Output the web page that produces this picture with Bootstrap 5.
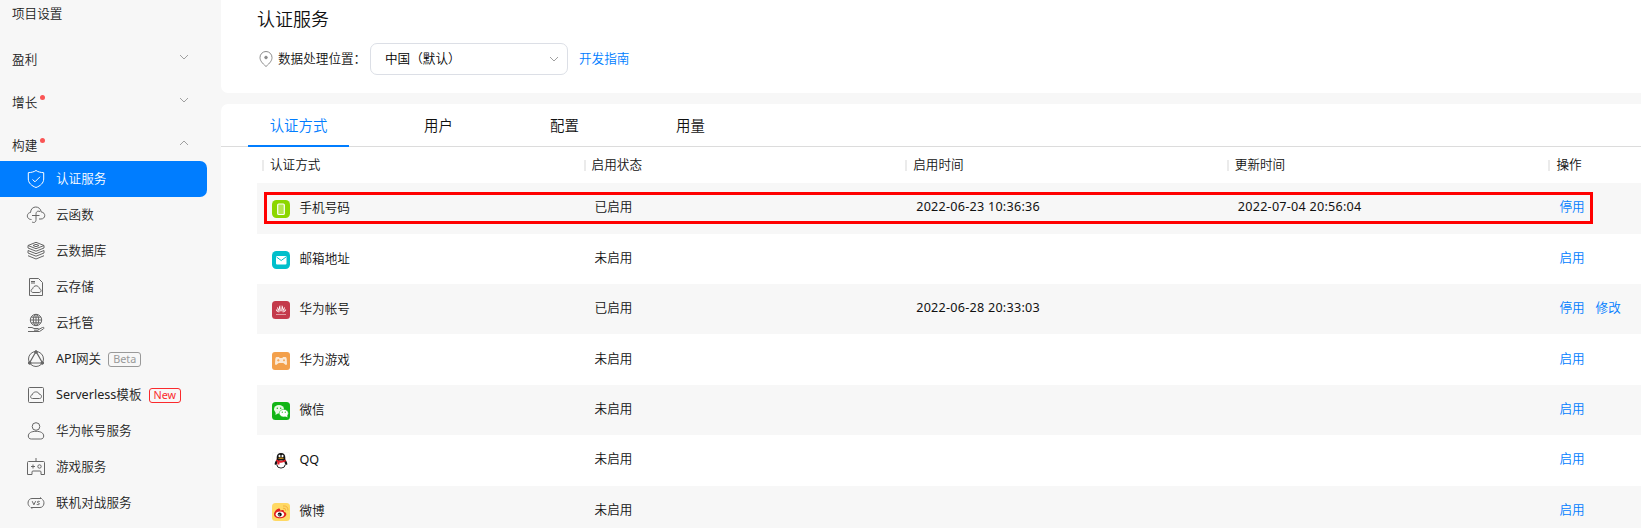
<!DOCTYPE html>
<html lang="zh-CN">
<head>
<meta charset="utf-8">
<meta name="viewport" content="width=device-width, initial-scale=1">
<title>认证服务</title>
<link href="https://cdn.jsdelivr.net/npm/bootstrap@5.3.0/dist/css/bootstrap.min.css" rel="stylesheet">
<style>
  body { font-family: "Noto Sans", "Noto Sans CJK SC", sans-serif; font-size: 12.6px; line-height: 20px; font-weight: 350; color: #111; background: #f7f7f7; height: 528px; overflow: hidden; }
  a { color: #007dff; text-decoration: none; }
  .side { width: 221px; color: #222; }
  .side-top { height: 35px; padding: 4px 0 0 12px; }
  .side-group { height: 43px; padding: 0 32px 0 12px; }
  .side-group.last { margin-bottom: -3px; }
  .side-group .label { padding-top: 6px; letter-spacing: .2px; }
  .dot { width: 5px; height: 5px; border-radius: 50%; background: #fa5555; margin: -4px 0 0 2px; }
  .side-item { height: 36px; width: 207px; padding-left: 26px; color: #222; gap: 10px; }
  .side-item svg { width: 20px; height: 20px; fill: none; stroke: #666; stroke-width: 1; flex: none; }
  .side-item.on { background: #007dff; color: #fff; border-radius: 0 7px 7px 0; }
  .side-item.on svg { stroke: #fff; }
  .tagbox { height: 15px; line-height: 12px; font-size: 10.8px; font-weight: 400; border: 1px solid #999; color: #999; border-radius: 3px; padding: 0 4px; margin-left: -3px; }
  .tagbox.new { color: #fa2a2d; border-color: #fa2a2d; }
  .lat { font-weight: 400; }
  .chev { fill: none; stroke: #a0a0a0; stroke-width: 1; width: 10px; height: 6px; }
  .head-panel { height: 93px; border-radius: 0 0 0 7px; padding: 8px 0 0 36px; }
  .page-title { font-size: 18px; line-height: 22px; font-weight: 350; margin: 0 0 13px; }
  .region { width: 198px; height: 32px; border: 1px solid #dcdfe6; border-radius: 7px; padding: 0 8px 0 14px; margin: 0 11px 0 8px; color: #000; }
  .main-panel { margin-top: 11px; height: 424px; border-radius: 7px 0 0 0; overflow: hidden; }
  .tabs { height: 43px; border-bottom: 1px solid #dcdcdc; padding-left: 27px; font-size: 14.4px; }
  .tabs a { color: #222; height: 43px; line-height: 44px; padding: 0 49px; width: 126px; white-space: nowrap; }
  .tabs a.on { width: 101px; color: #007dff; border-bottom: 2px solid #007dff; padding: 0; text-align: center; margin-right: 26px; }
  .tbl { margin-left: 36px; }
  .trow { display: grid; grid-template-columns: repeat(4, 321.6px) 1fr; height: 50.4px; align-items: center; }
  .trow.stripe { background: #f7f7f7; }
  .trow > div { padding-left: 16px; height: 22px; }
  .trow .way { padding-left: 15px; gap: 9.5px; }
  .trow svg { width: 18px; height: 18px; flex: none; position: relative; top: 1px; }
  .thead-row { height: 36.2px; }
  .trow.thead-row > div { padding-left: 5px; }
  .thead-row > div::before { content: ""; width: 2px; height: 11px; background: #ebebeb; margin-right: 6px; }
  .trow .num { font-weight: 400; letter-spacing: .25px; }
  .focus-box { position: absolute; left: 264px; top: 192px; width: 1329px; height: 32px; border: 3px solid #f00; }
</style>
</head>
<body>
<div class="d-flex">
  <nav class="side flex-shrink-0">
    <div class="side-top">项目设置</div>
    <div class="side-group d-flex align-items-center"><span class="label">盈利</span><svg class="chev ms-auto" viewBox="0 0 10 6"><path d="M1 1l4 4 4-4"/></svg></div>
    <div class="side-group d-flex align-items-center"><span class="label">增长</span><i class="dot"></i><svg class="chev ms-auto" viewBox="0 0 10 6"><path d="M1 1l4 4 4-4"/></svg></div>
    <div class="side-group last d-flex align-items-center"><span class="label">构建</span><i class="dot"></i><svg class="chev ms-auto" viewBox="0 0 10 6"><path d="M1 5l4-4 4 4"/></svg></div>
    <a class="side-item on d-flex align-items-center"><svg viewBox="0 0 20 20"><path d="M10 1.500C12 3 15 3.500 17.700 3.700V10c0 4-3.500 7-7.700 8.500C5.800 17 2.300 14 2.300 10V3.700C5 3.500 8 3 10 1.500zM6.500 10.500l2.500 2.300 5-5"/></svg>认证服务</a>
    <a class="side-item d-flex align-items-center"><svg viewBox="0 0 20 20"><path d="M5.500 14.500C0 14.500.3 7.800 4.500 7.500 5 0 14.500.500 15.200 7c5 .5 4.500 7-.2 7h-2M14 6.500c-3-1-4 .5-4 3v5c0 3-2 3.500-4 2.500M6 10.500h7.500"/></svg>云函数</a>
    <a class="side-item d-flex align-items-center"><svg viewBox="0 0 20 20"><path d="M10 1.300l8 3.200-8 3.200-8-3.200zM10 3.300l3 1.200-3 1.200-3-1.200zM2 4.500V7l8 3.200L18 7V4.500M2 9.500l8 3.200 8-3.200M2 12l8 3.200 8-3.200M2 14.700l8 3.300 8-3.300M2 9.500V12M18 9.500V12"/></svg>云数据库</a>
    <a class="side-item d-flex align-items-center"><svg viewBox="0 0 20 20"><path d="M3.500 1.500h9l4 4v13h-13zM5 4.500h4M5 6h4M7 15.500c-2.500 0-2.500-3.500-.3-3.700.8-4 6-4 6.800 0 2.300.2 2 3.700-.3 3.700z"/></svg>云存储</a>
    <a class="side-item d-flex align-items-center"><svg viewBox="0 0 20 20"><circle cx="10" cy="7" r="5.700"/><ellipse cx="10" cy="7" rx="2.700" ry="5.700"/><path d="M10 1.300v11.400M4.300 7h11.400M5.200 4.200h9.600M5.200 9.800h9.600M2 14.500h4l2 1h4c1 0 1 1.700 0 1.700H8M12.500 16.500l4-2c1.500-.5 2 .5 1 1.300l-4 2.700H2"/></svg>云托管</a>
    <a class="side-item d-flex align-items-center"><svg viewBox="0 0 20 20"><circle cx="10" cy="10" r="7.500"/><path d="M10 2.500L3.500 14h13z" stroke-width="1.200"/><g fill="#666"><circle cx="10" cy="3" r="1.300"/><circle cx="3.700" cy="14" r="1.300"/><circle cx="16.300" cy="14" r="1.300"/></g></svg><span><span class="lat">API</span>网关</span><span class="tagbox">Beta</span></a>
    <a class="side-item d-flex align-items-center"><svg viewBox="0 0 20 20"><rect x="2.500" y="2.500" width="15" height="15" rx="1"/><path d="M6.500 13.500c-2.500 0-2.500-3.500-.2-3.700.5-3.500 6-4 7-.6 2.800 0 3 4.300.2 4.300z"/></svg><span><span class="lat">Serverless</span>模板</span><span class="tagbox new">New</span></a>
    <a class="side-item d-flex align-items-center"><svg viewBox="0 0 20 20"><circle cx="10" cy="5.500" r="3.800"/><path d="M2.300 15c0-3 3-4.700 7.700-4.700s7.700 1.700 7.700 4.700c0 2-1.200 3-3 3H5.300c-1.800 0-3-1-3-3z"/></svg>华为帐号服务</a>
    <a class="side-item d-flex align-items-center"><svg viewBox="0 0 20 20"><path d="M10 1v3.500M1.500 5.500q0-1 1-1h15q1 0 1 1v12h-3.500v-2.500q0-1-1-1H7q-1 0-1 1v2.500H1.500zM5 9.500h4M7 7.500v4"/><circle cx="13.500" cy="9.500" r="1.700"/></svg>游戏服务</a>
    <a class="side-item d-flex align-items-center"><svg viewBox="0 0 20 20"><path d="M3.700 13.500C1 12 1.500 5.500 6 5.500h9.500l-1.500-1M16.300 6.500c2.700 1.500 2.200 8-2.300 8H4.800l1.500 1M6.200 8.200l1.700 3.600 1.700-3.600M13.700 8.500c-2.700-.8-3 1-1.300 1.500 2 .5 1 2.300-1.700 1.400"/></svg>联机对战服务</a>
  </nav>

  <main class="flex-grow-1">
    <section class="head-panel bg-white">
      <h1 class="page-title">认证服务</h1>
      <div class="d-flex align-items-center">
        <svg width="16" height="18" viewBox="0 0 16 18" fill="none" stroke="#8c8c8c" style="margin-right:5px"><path d="M9 16.500C5 13 3 10.500 3 7.500a6 6 0 0 1 12 0c0 3-2 5.500-6 9z"/><circle cx="9" cy="7.500" r="1.300" fill="#8c8c8c"/></svg>
        <span style="width:84px;white-space:nowrap">数据处理位置：</span>
        <div class="region d-flex align-items-center"><span>中国（默认）</span><svg class="chev ms-auto" viewBox="0 0 10 6"><path d="M1 1l4 4 4-4"/></svg></div>
        <a href="#">开发指南</a>
      </div>
    </section>

    <section class="main-panel bg-white">
      <div class="tabs d-flex"><a class="on">认证方式</a><a>用户</a><a>配置</a><a>用量</a></div>
      <div class="tbl">
        <div class="trow thead-row">
          <div class="d-flex align-items-center">认证方式</div><div class="d-flex align-items-center">启用状态</div><div class="d-flex align-items-center">启用时间</div><div class="d-flex align-items-center">更新时间</div><div class="d-flex align-items-center">操作</div>
        </div>
        <div class="trow stripe">
          <div class="way d-flex align-items-center"><svg viewBox="0 0 18 18"><rect width="18" height="18" rx="4.500" fill="#8cd600"/><rect x="5.700" y="4" width="6.600" height="10.500" rx="1" fill="#b4e650" stroke="#fff" stroke-width="1.200"/></svg>手机号码</div><div>已启用</div><div class="num">2022-06-23 10:36:36</div><div class="num">2022-07-04 20:56:04</div><div><a href="#">停用</a></div>
        </div>
        <div class="trow">
          <div class="way d-flex align-items-center"><svg viewBox="0 0 18 18"><rect width="18" height="18" rx="4.500" fill="#00bfcb"/><rect x="4" y="5" width="10.500" height="8.500" rx="1" fill="#fff"/><path d="M4.500 6l4.700 3.500L14 6" fill="none" stroke="#00bfcb"/></svg>邮箱地址</div><div>未启用</div><div></div><div></div><div><a href="#">启用</a></div>
        </div>
        <div class="trow stripe">
          <div class="way d-flex align-items-center"><svg viewBox="0 0 18 18"><rect width="18" height="18" rx="3.500" fill="#c43a4b"/><g fill="#fff"><path d="M8.800 10.800C6.500 8 6.500 5.500 8.200 4.300zM9.200 10.800c2.300-2.800 2.300-5.300.6-6.500zM8.200 11C5.500 9.500 4.700 7.500 5.600 5.800zM9.800 11c2.700-1.500 3.500-3.500 2.600-5.200zM7.700 11.500C5 11.300 3.700 9.800 3.900 8zM10.300 11.500c2.700-.2 4-1.700 3.800-3.500z"/><path d="M4 13h10v1H4z" opacity=".5"/></g></svg>华为帐号</div><div>已启用</div><div class="num">2022-06-28 20:33:03</div><div></div><div><a href="#">停用</a><a href="#" style="margin-left:11px">修改</a></div>
        </div>
        <div class="trow">
          <div class="way d-flex align-items-center"><svg viewBox="0 0 18 18"><rect width="18" height="18" rx="3" fill="#f3a04b"/><path d="M4.500 5h2.300l1 1h2.400l1-1h2.300q1 0 1.200 2l.3 4.500q0 2-1.500 1.300L11.300 11H6.700l-2.200 1.800Q3 13.500 3 11.500L3.300 7q.2-2 1.200-2z" fill="#fbe9d5"/><path d="M5 8.300h2.600M6.300 7v2.600M11 8.300h2M12 7.300v2" stroke="#f3a04b" stroke-width=".8"/></svg>华为游戏</div><div>未启用</div><div></div><div></div><div><a href="#">启用</a></div>
        </div>
        <div class="trow stripe">
          <div class="way d-flex align-items-center"><svg viewBox="0 0 18 18"><rect width="18" height="18" rx="3.500" fill="#11b516"/><g fill="#e9f9e6"><ellipse cx="7" cy="7.300" rx="5" ry="4.200"/><path d="M3.800 9.500L3.500 13l3-2z"/></g><ellipse cx="11.800" cy="11.200" rx="4.500" ry="3.800" fill="#fff" stroke="#11b516" stroke-width=".5"/><path d="M13 14l2.500 1.500-.5-3z" fill="#fff"/><g fill="#11b516"><circle cx="5.300" cy="6.200" r=".7"/><circle cx="8.700" cy="6.200" r=".7"/><circle cx="10.300" cy="10.200" r=".6"/><circle cx="13.300" cy="10.200" r=".6"/></g></svg>微信</div><div>未启用</div><div></div><div></div><div><a href="#">启用</a></div>
        </div>
        <div class="trow">
          <div class="way d-flex align-items-center"><svg viewBox="0 0 18 18"><rect x=".3" y=".3" width="17.400" height="17.400" rx="2" fill="#fff" stroke="#f2f2f2" stroke-width=".6"/><path d="M9 1c3 0 4.300 2 4.300 4.500v2c1.300 1.500 2.200 3.500 2 5-.4.900-1.200.3-1.700-.7-.5 3-2 4-4.600 4s-4.100-1-4.600-4c-.5 1-1.300 1.600-1.700.7-.2-1.500.7-3.500 2-5v-2C4.700 3 6 1 9 1z" fill="#151515"/><ellipse cx="9" cy="12.200" rx="4" ry="3.800" fill="#fff"/><g fill="#fff"><ellipse cx="7.500" cy="4" rx="1" ry="1.300"/><ellipse cx="10.500" cy="4" rx="1" ry="1.300"/></g><ellipse cx="9" cy="6.300" rx="3" ry=".8" fill="#c98f1b"/><path d="M4.300 7.500Q9 10 13.700 7.500l.3 1.700Q10 11.200 7.500 10.400V12.500H5.300V9.700l-1.300-.6z" fill="#e3202b"/><path d="M4.700 12.500q.3 3.600 4.300 3.600t4.300-3.600" fill="none" stroke="#151515" stroke-width=".9"/></svg><span class="lat">QQ</span></div><div>未启用</div><div></div><div></div><div><a href="#">启用</a></div>
        </div>
        <div class="trow stripe">
          <div class="way d-flex align-items-center"><svg viewBox="0 0 18 18"><rect width="18" height="18" rx="3.500" fill="#ffd964"/><path d="M2 11.200C2 8.500 6 5 7.600 5.700c.8.400.7 1.200.5 1.800 2-.9 4.300-.9 3.900 1.200 2 .6 2.500 1.500 2.300 2.800-.4 2.300-3.300 3.800-6.500 3.800S2 13.700 2 11.200z" fill="#e22020"/><ellipse cx="7.900" cy="11.300" rx="4.200" ry="2.900" fill="#fff"/><circle cx="7.700" cy="11.500" r="2" fill="#111"/><circle cx="7" cy="12" r=".7" fill="#fff"/><path d="M11 5.200q3-.4 2.700 2.600M11 3q5-.7 5 4.500" fill="none" stroke="#f5b040" stroke-width="1"/></svg>微博</div><div>未启用</div><div></div><div></div><div><a href="#">启用</a></div>
        </div>
      </div>
    </section>
  </main>
</div>
<div class="focus-box"></div>
<script src="https://cdn.jsdelivr.net/npm/bootstrap@5.3.0/dist/js/bootstrap.bundle.min.js"></script>
</body>
</html>
